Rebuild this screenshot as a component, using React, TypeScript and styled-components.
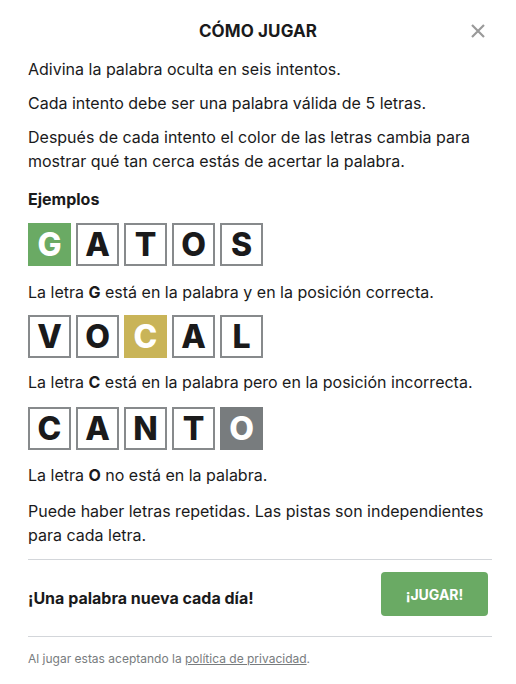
import React from "react";
import styled, { createGlobalStyle } from "styled-components";

const Global = createGlobalStyle`
  body { margin: 0; background: #fff; font-family: Inter, "Noto Sans", sans-serif; color: #1a1a1b; }
`;

const Modal = styled.div`
  width: 516px;
  box-sizing: border-box;
  padding: 19px 24px 0 28px;
`;

const Header = styled.div`
  position: relative;
  display: flex;
  justify-content: center;
  height: 24px;
  margin-left: -28px;
  margin-right: -24px;
`;

const Title = styled.h1`
  margin: 0;
  font-size: 17px;
  line-height: 24px;
  font-weight: 700;
  letter-spacing: 0.1px;
  text-transform: uppercase;
`;

const Close = styled.button`
  position: absolute;
  right: 31px;
  top: 5px;
  width: 14px;
  height: 14px;
  padding: 0;
  border: none;
  background: none;
  display: flex;
`;

const P = styled.p<{ $mt?: number }>`
  margin: ${(p) => p.$mt ?? 10}px 0 0;
  font-size: 16px;
  line-height: 24px;
`;

const Sub = styled.h3`
  margin: 14px 0 0;
  font-size: 16px;
  line-height: 24px;
  font-weight: 700;
`;

const Row = styled.div<{ $mt: number }>`
  display: flex;
  gap: 5px;
  margin-top: ${(p) => p.$mt}px;
`;

const Tile = styled.div<{ $state?: "correct" | "present" | "absent" }>`
  width: 43px;
  height: 43px;
  box-sizing: border-box;
  display: flex;
  align-items: center;
  justify-content: center;
  font-size: 32px;
  font-weight: 800;
  border: 2px solid
    ${(p) =>
      p.$state === "correct" ? "#6aaa64" : p.$state === "present" ? "#c9b458" : p.$state === "absent" ? "#787c7e" : "#878a8c"};
  background: ${(p) =>
    p.$state === "correct" ? "#6aaa64" : p.$state === "present" ? "#c9b458" : p.$state === "absent" ? "#787c7e" : "#fff"};
  color: ${(p) => (p.$state ? "#fff" : "#1a1a1b")};
`;

const Divider = styled.hr<{ $mt: number }>`
  border: none;
  border-top: 1px solid #d3d6da;
  margin: ${(p) => p.$mt}px 0 0;
`;

const Footer = styled.div`
  display: flex;
  align-items: center;
  justify-content: space-between;
  padding: 12px 4px 20px 0;
`;

const Promo = styled.span`
  font-size: 16px;
  font-weight: 700;
  line-height: 24px;
  margin-top: 8px;
`;

const PlayButton = styled.button`
  width: 107px;
  height: 44px;
  border: none;
  border-radius: 4px;
  background: #6aaa64;
  color: #fff;
  font-family: inherit;
  font-size: 14px;
  font-weight: 700;
`;

const Legal = styled.p`
  margin: 14px 0 0;
  font-size: 12px;
  line-height: 16px;
  color: #787c7e;
  a { color: #787c7e; }
`;

type S = "correct" | "present" | "absent" | undefined;

const Word = ({ word, idx, state, mt }: { word: string; idx: number; state: S; mt: number }) => (
  <Row $mt={mt}>
    {word.split("").map((l, i) => (
      <Tile key={i} $state={i === idx ? state : undefined}>
        {l}
      </Tile>
    ))}
  </Row>
);

export default function App() {
  return (
    <>
      <Global />
      <Modal>
        <Header>
          <Title>Cómo jugar</Title>
          <Close aria-label="cerrar">
            <svg width="14" height="14" viewBox="0 0 14 14">
              <path d="M1 1L13 13M13 1L1 13" stroke="#9a9a9a" strokeWidth="2.2" />
            </svg>
          </Close>
        </Header>
        <P $mt={14}>Adivina la palabra oculta en seis intentos.</P>
        <P>Cada intento debe ser una palabra válida de 5 letras.</P>
        <P>
          Después de cada intento el color de las letras cambia para mostrar qué tan cerca estás de acertar la
          palabra.
        </P>
        <Sub>Ejemplos</Sub>
        <Word word="GATOS" idx={0} state="correct" mt={12} />
        <P $mt={14}>
          La letra <b>G</b> está en la palabra y en la posición correcta.
        </P>
        <Word word="VOCAL" idx={2} state="present" mt={11} />
        <P $mt={12}>
          La letra <b>C</b> está en la palabra pero en la posición incorrecta.
        </P>
        <Word word="CANTO" idx={4} state="absent" mt={13} />
        <P $mt={13}>
          La letra <b>O</b> no está en la palabra.
        </P>
        <P $mt={12}>Puede haber letras repetidas. Las pistas son independientes para cada letra.</P>
        <Divider $mt={12} />
        <Footer>
          <Promo>¡Una palabra nueva cada día!</Promo>
          <PlayButton>¡JUGAR!</PlayButton>
        </Footer>
        <Divider $mt={0} />
        <Legal>
          Al jugar estas aceptando la <a href="#">política de privacidad</a>.
        </Legal>
      </Modal>
    </>
  );
}
